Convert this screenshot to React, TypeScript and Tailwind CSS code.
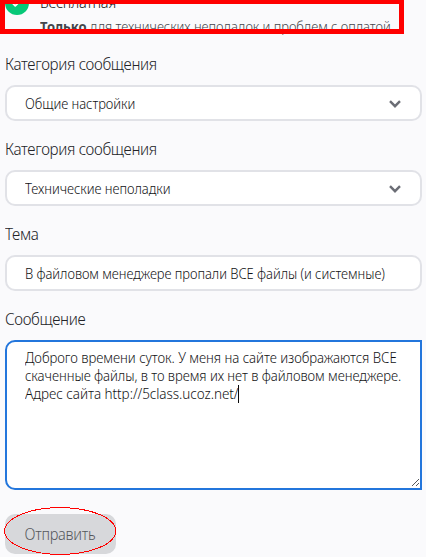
import { useState } from "react"
import { Check } from "lucide-react"

type SelectFieldProps = {
    label: string
    value: string
}

const labelClass = "block h-6 origin-left scale-x-[0.948] text-[16px] leading-6 font-light tracking-[-0.35px] whitespace-nowrap text-[#222327]"
const boxClass = "flex h-9 w-[417px] items-center rounded-[10px] border-2 border-[#e1e2e7] bg-white pl-[18px] text-[14px] text-[#111214]"

function SelectField({ label, value }: SelectFieldProps) {
    return (
        <div className="flex flex-col gap-[9px]">
            <span className={labelClass}>{label}</span>
            <button type="button" className={`${boxClass} justify-between pr-[19px]`}>
                <span className="origin-left scale-x-[0.93] tracking-[-0.05px] whitespace-nowrap">{value}</span>
                <svg width="12" height="8" viewBox="0 0 12 8" fill="none" className="mt-px">
                    <path d="M1 1.2L6 6.2L11 1.2" stroke="#6b6d75" strokeWidth="2.4" />
                </svg>
            </button>
        </div>
    )
}

// Support ticket form

export default function App() {
    const [subject, setSubject] = useState("В файловом менеджере пропали ВСЕ файлы (и системные)")

    return (
        <div className="relative h-[557px] w-[426px] overflow-hidden bg-[#fafafc] font-['Noto_Sans','Open_Sans',sans-serif] font-[350] text-[#111214]">
            {/* bottom part of the selected plan */}
            <div className="relative h-[35px] overflow-hidden">
                <div className="flex gap-[11px] pl-[5px]">
                    <div className="-mt-[9px] flex h-6 w-6 shrink-0 items-center justify-center rounded-full bg-[#07c878] text-white">
                        <Check size={14} strokeWidth={3} />
                    </div>
                    <div className="-mt-[10px] whitespace-nowrap">
                        <div className="h-6 origin-left scale-x-[0.97] text-[15px] leading-6 tracking-[-0.3px]">Бесплатная</div>
                        <div className="mt-[3px] origin-left scale-x-[0.93] text-[14px] leading-5 tracking-[-0.05px] text-[#44464b]">
                            <b>Только</b> для технических неполадок и проблем с оплатой
                        </div>
                    </div>
                </div>
                <div className="absolute top-0 left-0 h-[34px] w-[404px] border-[5px] border-t-4 border-[#ff0000]" />
            </div>

            <form className="flex flex-col gap-4 pt-[17px] pl-[5px]" onSubmit={e => e.preventDefault()}>
                <SelectField label="Категория сообщения" value="Общие настройки" />
                <SelectField label="Категория сообщения" value="Технические неполадки" />
                <div className="flex flex-col gap-[9px]">
                    <label htmlFor="subject" className={labelClass}>Тема</label>
                    <div className={boxClass}>
                        <input
                            id="subject"
                            value={subject}
                            onChange={e => setSubject(e.target.value)}
                            className="w-[405px] shrink-0 origin-left scale-x-[0.928] tracking-[-0.05px] outline-none"
                        />
                    </div>
                </div>
                <div className="flex flex-col gap-[9px]">
                    <span className={labelClass}>Сообщение</span>
                    <div className="relative h-[150px] w-[417px] rounded-l-[10px] border-2 border-[#2376dc] bg-white pt-[7px] pl-[18px] text-[14px] leading-[18px] tracking-[-0.05px] whitespace-nowrap">
                        <p className="origin-left scale-x-[0.944]">Доброго времени суток. У меня на сайте изображаются ВСЕ</p>
                        <p className="origin-left scale-x-[0.937]">скаченные файлы, в то время их нет в файловом менеджере.</p>
                        <p className="flex origin-left scale-x-[0.964]">
                            Адрес сайта http://5class.ucoz.net/
                            <span className="h-[18px] w-px bg-black" />
                        </p>
                        <svg className="absolute right-px bottom-px" width="8" height="8" viewBox="0 0 8 8" shapeRendering="crispEdges">
                            <path d="M0.5 7.5L7.5 0.5M4.5 7.5L7.5 4.5" stroke="#55575c" />
                        </svg>
                    </div>
                </div>
                <div className="relative mt-2 h-10 w-[111px]">
                    <button type="submit" className="flex h-10 w-[111px] items-center justify-center rounded-[10px] bg-[#d7d8db] pr-0.5 text-[16px] font-light tracking-[-0.3px] text-[#55575c]">
                        <span className="scale-x-[0.91]">Отправить</span>
                    </button>
                    <svg className="absolute -top-[7px] -left-px" width="113" height="49" viewBox="0 0 113 49">
                        <ellipse cx="56.2" cy="24" rx="55.5" ry="23.4" fill="none" stroke="#ff0000" shapeRendering="crispEdges" />
                    </svg>
                </div>
            </form>
        </div>
    )
}
